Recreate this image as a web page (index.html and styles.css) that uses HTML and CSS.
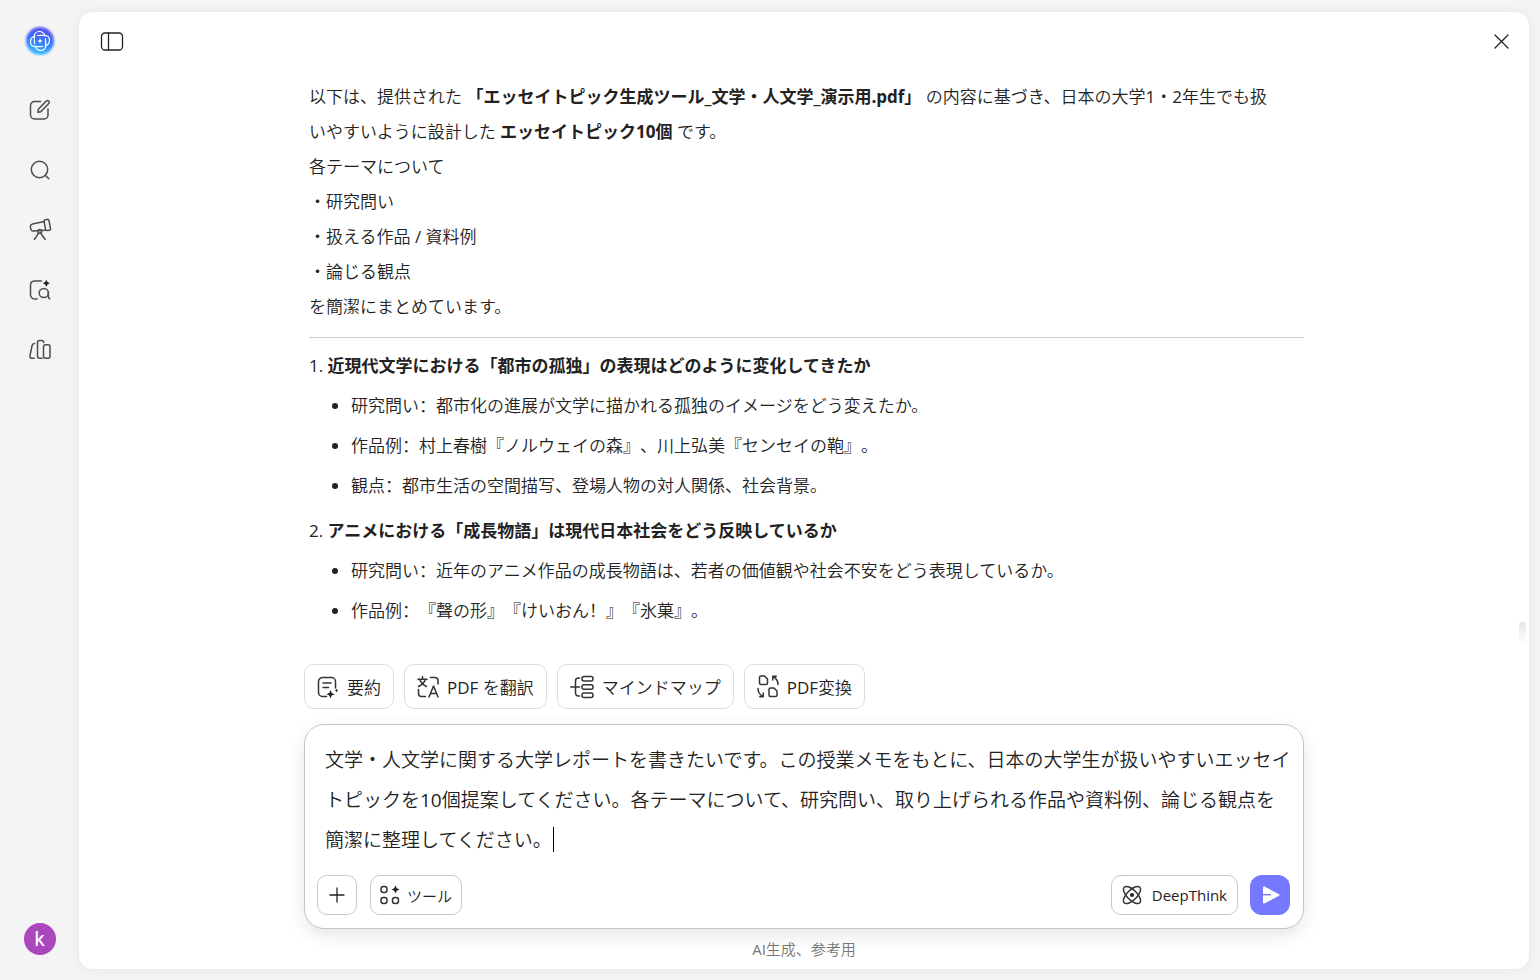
FILE: index.html
```html
<!DOCTYPE html>
<html lang="zh-CN">
<head>
  <meta charset="UTF-8" />
  <meta name="viewport" content="width=device-width, initial-scale=1.0"/>
  <title>エッセイトピック生成</title>
  <link rel="stylesheet" href="styles.css">
</head>
<body>
  <nav class="sidebar">
    <a href="#" class="logo" aria-label="ホーム">
      <svg width="32" height="32" viewBox="0 0 32 32">
        <defs>
          <linearGradient id="logoFill" x1="0.6" y1="0" x2="0.4" y2="1">
            <stop offset="0" stop-color="#5b50ee"/>
            <stop offset="0.5" stop-color="#3677f8"/>
            <stop offset="1" stop-color="#3fc4ff"/>
          </linearGradient>
          <filter id="logoGlow" x="-20%" y="-20%" width="140%" height="140%"><feGaussianBlur stdDeviation="1"/></filter>
        </defs>
        <circle cx="16" cy="16" r="14" fill="url(#logoFill)" filter="url(#logoGlow)"/>
        <g fill="none" stroke="#fff" stroke-width="1.2" stroke-linecap="round">
          <path id="petal" d="M10.300 16V11.500C10.300 8.500 12.500 6.500 15.300 6.500C18 6.500 20 8 20.800 10.800M13.500 10.500H17"/>
          <use href="#petal" transform="rotate(90 16 16)"/>
          <use href="#petal" transform="rotate(180 16 16)"/>
          <use href="#petal" transform="rotate(270 16 16)"/>
        </g>
        <path d="M16 13.200l.8 2 2 .8-2 .8-.8 2-.8-2-2-.8 2-.8z" fill="#fff"/>
      </svg>
    </a>
    <a href="#" aria-label="新しいチャット">
      <svg class="icon" width="24" height="24" viewBox="0 0 24 24">
        <path d="M12.500 3.500H6.500a4 4 0 0 0-4 4v9.500a4 4 0 0 0 4 4h9.500a4 4 0 0 0 4-4v-6"/>
        <path d="M10 14.300l.3-3 8-8.200a1.700 1.700 0 0 1 2.500 0 1.700 1.700 0 0 1 0 2.400l-8 8.200z"/>
      </svg>
    </a>
    <a href="#" aria-label="検索">
      <svg class="icon" width="24" height="24" viewBox="0 0 24 24">
        <circle cx="11.500" cy="11.500" r="8.200"/><path d="M17.500 17.500l3.300 3.300"/>
      </svg>
    </a>
    <a href="#" aria-label="探索">
      <svg class="icon" width="24" height="24" viewBox="0 0 24 24">
        <path d="M16.300 3.400l-12 2.700c-1.400.4-2.100 1.400-1.900 2.800l.4 2.200c.3 1.400 1.300 2 2.700 1.900l11.900-.8"/>
        <path d="M17.300 1.800l2-.4c1-.2 1.500.2 1.700 1.200l1.500 8c.2 1-.2 1.600-1.200 1.700l-2 .3c-1 .1-1.500-.3-1.700-1.200l-1.500-7.900c-.2-1 .2-1.500 1.200-1.700z"/>
        <circle cx="11.700" cy="13.400" r="1.900"/><path d="M10.600 15.200l-4.300 6.300M12.800 15.200l4.400 6.300"/>
      </svg>
    </a>
    <a href="#" aria-label="文書検索">
      <svg class="icon" width="24" height="24" viewBox="0 0 24 24">
        <path d="M13.500 3H6.300a4 4 0 0 0-3.800 4v10a4 4 0 0 0 4 4h2.700"/>
        <circle cx="15.800" cy="15" r="4.600"/><path d="M20.400 14v4.500c0 1.200.4 2 1.400 2.300"/>
        <path class="solid" d="M18.300 1.800l1.200 2.300 2.300 1.200-2.300 1.200-1.200 2.300-1.200-2.300-2.300-1.200 2.300-1.200z"/>
      </svg>
    </a>
    <a href="#" aria-label="ライブラリ">
      <svg class="icon" width="24" height="24" viewBox="0 0 24 24">
        <path d="M6.700 5.500c-1.500 0-2.300.6-2.600 2L2 17.500c-.3 1.600.3 2.800 2 2.800h2.200"/>
        <path d="M14 20.300h-2.500a2 2 0 0 1-2-2V4.600a2 2 0 0 1 2-2h2.200a2 2 0 0 1 2 2"/>
        <rect x="15.500" y="6.800" width="6.500" height="13.500" rx="2"/>
      </svg>
    </a>
    <button type="button" class="avatar">k</button>
  </nav>

  <main class="panel">
    <header class="topbar">
      <button type="button" class="icon-btn" aria-label="サイドバー">
        <svg class="icon thin" width="24" height="24" viewBox="0 0 24 24">
          <rect x="1.500" y="4" width="21" height="17" rx="3.500"/><path d="M8.500 4v17"/>
        </svg>
      </button>
      <button type="button" class="icon-btn" aria-label="閉じる">
        <svg class="icon thin" width="24" height="24" viewBox="0 0 24 24"><path d="M5 6l13 13M18 6l-13 13"/></svg>
      </button>
    </header>

    <section class="thread">
      <article class="message">
        <p>以下は、提供された <strong>「エッセイトピック生成ツール_文学・人文学_演示用.pdf」</strong> の内容に基づき、日本の大学1・2年生でも扱<br>いやすいように設計した <strong>エッセイトピック10個</strong> です。<br>各テーマについて<br>・研究問い<br>・扱える作品 / 資料例<br>・論じる観点<br>を簡潔にまとめています。</p>
        <hr>
        <h3>1. <strong>近現代文学における「都市の孤独」の表現はどのように変化してきたか</strong></h3>
        <ul>
          <li>研究問い：都市化の進展が文学に描かれる孤独のイメージをどう変えたか。</li>
          <li>作品例：村上春樹『ノルウェイの森』、川上弘美『センセイの鞄』。</li>
          <li>観点：都市生活の空間描写、登場人物の対人関係、社会背景。</li>
        </ul>
        <h3>2. <strong>アニメにおける「成長物語」は現代日本社会をどう反映しているか</strong></h3>
        <ul>
          <li>研究問い：近年のアニメ作品の成長物語は、若者の価値観や社会不安をどう表現しているか。</li>
          <li>作品例：『聲の形』『けいおん！』『氷菓』。</li>
        </ul>
      </article>
      <span class="scroll-thumb"></span>
    </section>

    <div class="dock">
      <div class="chips">
        <button type="button" class="chip">
          <svg class="icon dark" width="22" height="24" viewBox="0 0 22 24">
            <path d="M9.500 21.500H5.500A4 4 0 0 1 1.500 17.500V6.500a4 4 0 0 1 4-4h9a4 4 0 0 1 4 4v6.500M6 8h8M6 12.500h5.500"/>
            <path class="solid" d="M13.500 15l1.200 3 3 1.200-3 1.200-1.200 3-1.200-3-3-1.200 3-1.200zM19.500 13.500l.6 1.400 1.400.6-1.400.6-.6 1.400-.6-1.400-1.400-.6 1.400-.6z"/>
          </svg>
          要約
        </button>
        <button type="button" class="chip">
          <svg class="icon dark" width="22" height="24" viewBox="0 0 22 24">
            <path d="M5.500 1.500v2.300M1 4.200h9M8.300 4.500c-1 3.200-3.200 5.500-6.800 7M2.800 4.500c1 3.200 3.200 5.500 6.700 7"/>
            <path d="M13.500 2.500H18a3 3 0 0 1 3 3V9M1.500 14.500v4a3 3 0 0 0 3 3h4"/>
            <path d="M12 22l4.500-11L21 22M13.500 18.500h6"/>
          </svg>
          PDF を翻訳
        </button>
        <button type="button" class="chip">
          <svg class="icon dark" width="24" height="24" viewBox="0 0 24 24">
            <path d="M9.500 3H8.500C6.500 3 5.500 4.200 5.500 6v11.500c0 2 1 3.500 3 3.500h1M.8 12h8.700"/>
            <rect x="12" y="1.500" width="11" height="4.500" rx="2"/><rect x="12" y="9.700" width="11" height="4.500" rx="2"/><rect x="12" y="18" width="11" height="4.500" rx="2"/>
          </svg>
          マインドマップ
        </button>
        <button type="button" class="chip">
          <svg class="icon dark" width="22" height="24" viewBox="0 0 22 24">
            <path d="M4 1h3.500l3 3v4a1.500 1.500 0 0 1-1.500 1.500H4A1.500 1.500 0 0 1 2.500 8V2.500A1.500 1.500 0 0 1 4 1zM13.500 13H17l3 3v4a1.500 1.500 0 0 1-1.500 1.500h-5A1.500 1.500 0 0 1 12 20v-5.500a1.500 1.500 0 0 1 1.500-1.500z"/>
            <path d="M21 9.500c0-3.500-1.500-6-4.700-8M15.800 5V1.200h3.500M1 13.500c0 3.500 1.500 6 4.700 8M6.200 18v3.700H2.700"/>
          </svg>
          PDF変換
        </button>
      </div>

      <form class="composer">
        <textarea id="prompt" rows="3" spellcheck="false" aria-label="メッセージ">文学・人文学に関する大学レポートを書きたいです。この授業メモをもとに、日本の大学生が扱いやすいエッセイトピックを10個提案してください。各テーマについて、研究問い、取り上げられる作品や資料例、論じる観点を
簡潔に整理してください。</textarea>
        <span class="caret"></span>
        <div class="toolbar">
          <button type="button" class="tool square" aria-label="追加">
            <svg class="icon thin" width="16" height="16" viewBox="0 0 16 16"><path d="M8 1v14M1 8h14"/></svg>
          </button>
          <button type="button" class="tool">
            <svg class="icon dark" width="20" height="20" viewBox="0 0 20 20">
              <rect x="1" y="1.500" width="6" height="6" rx="2.500"/><rect x="1" y="12.500" width="6" height="6" rx="2.500"/><rect x="12.500" y="12.500" width="6" height="6" rx="2.500"/>
              <path class="solid" d="M15.500.5l1.300 2.700 2.700 1.300-2.700 1.300-1.300 2.700-1.300-2.700-2.700-1.300 2.700-1.300z"/>
            </svg>
            ツール
          </button>
          <button type="button" class="tool deep">
            <svg class="icon dark" width="20" height="20" viewBox="0 0 20 20">
              <ellipse cx="10" cy="10" rx="11" ry="5" transform="rotate(45 10 10)"/>
              <ellipse cx="10" cy="10" rx="11" ry="5" transform="rotate(-45 10 10)"/>
              <circle class="solid" cx="10" cy="10" r="2"/>
            </svg>
            DeepThink
          </button>
          <button type="submit" class="send" aria-label="送信">
            <svg width="20" height="20" viewBox="0 0 20 20">
              <path d="M3 2.600c0-.9.700-1.300 1.500-1L19 9.200c.8.400.8 1.200 0 1.600L4.500 18.400c-.8.300-1.500-.1-1.500-1z" fill="#fff"/>
              <path d="M2 9.700h9" stroke="#7678ff" stroke-width="1.400"/>
            </svg>
          </button>
        </div>
      </form>
      <p class="note">AI生成、参考用</p>
    </div>
  </main>
</body>
</html>
```

FILE: styles.css
```css
* {
  box-sizing: border-box;
  margin: 0;
  padding: 0;
}

body {
  display: flex;
  height: 100vh;
  background: #f4f4f4;
  color: #222;
  font-family: "Open Sans", "Noto Sans CJK SC DemiLight", "Noto Sans CJK SC", sans-serif;
  font-size: 17px;
  text-spacing-trim: space-all;
}

button, textarea {
  font: inherit;
  color: inherit;
  background: none;
  border: none;
}

button {
  cursor: pointer;
}

.icon {
  display: block;
  flex: none;
  fill: none;
  stroke: #4c4c4c;
  stroke-width: 1.5;
  stroke-linecap: round;
  stroke-linejoin: round;
}

.icon.dark {
  stroke: #333;
}

.icon.thin {
  stroke: #222;
  stroke-width: 1.3;
}

.icon .solid {
  fill: #222;
  stroke: none;
}

/* sidebar */
.sidebar {
  flex: none;
  width: 79px;
  display: flex;
  flex-direction: column;
  align-items: center;
  gap: 36px;
  padding: 25px 0 25px;
}

.sidebar a {
  display: block;
}

.logo {
  height: 37px;
}

.avatar {
  width: 32px;
  height: 32px;
  margin-top: auto;
  border-radius: 50%;
  background: #ab47bc;
  color: #fff;
  font-family: Roboto, sans-serif;
  font-size: 20px;
  line-height: 32px;
}

/* main panel */
.panel {
  flex: 1;
  min-width: 0;
  display: flex;
  flex-direction: column;
  margin: 12px 11px 11px 0;
  border-radius: 14px;
  background: #fff;
  box-shadow: 0 0 12px rgba(0,0,0,0.06);
}

.topbar {
  display: flex;
  justify-content: space-between;
  padding: 17px 15px 18px 21px;
}

.thread {
  position: relative;
  flex: 1;
  min-height: 0;
  overflow: hidden;
}

.message {
  max-width: 1000px;
  margin: 0 auto;
  padding: 8px 0 0 5px;
  line-height: 35px;
}

.message hr {
  margin: 13px 0 10px;
  border: none;
  border-top: 1px solid #ccc;
}

.message h3 {
  font-size: 17px;
  font-weight: 400;
}

.message strong {
  font-family: "Open Sans", "Noto Sans CJK SC", sans-serif;
  font-weight: 700;
}

.message ul {
  padding-left: 42px;
  margin-bottom: 10px;
}

.message li {
  margin-top: 5px;
}

.scroll-thumb {
  position: absolute;
  right: 3px;
  bottom: 0;
  width: 7px;
  height: 22px;
  border-radius: 3px 3px 0 0;
  background: linear-gradient(#e6e6e6, #fff);
}

/* chips and composer */
.dock {
  width: 100%;
  max-width: 1000px;
  margin: 0 auto;
  padding: 20px 0 9px;
}

.chips {
  display: flex;
  gap: 10px;
  margin-bottom: 15px;
}

.chip {
  display: flex;
  align-items: center;
  gap: 8px;
  height: 45px;
  padding: 0 12px;
  border: 1px solid #ddd;
  border-radius: 10px;
  background: #fff;
}

.composer {
  position: relative;
  padding: 15px 0 13px;
  border: 1px solid #c4c4c4;
  border-radius: 20px;
  background: #fff;
  box-shadow: 0 6px 18px rgba(0,0,0,0.1);
}

.composer textarea {
  display: block;
  width: calc(100% - 28px);
  margin: 0 8px 15px 20px;
  font-size: 19px;
  line-height: 40px;
  outline: none;
  resize: none;
  overflow: hidden;
}

.caret {
  position: absolute;
  left: 248px;
  top: 102px;
  width: 1px;
  height: 25px;
  background: #000;
}

.composer textarea:focus + .caret {
  display: none;
}

.toolbar {
  display: flex;
  align-items: center;
  padding: 0 13px 0 12px;
}

.tool {
  display: flex;
  align-items: center;
  gap: 7px;
  height: 40px;
  padding: 0 9px;
  border: 1px solid #c8c8c8;
  border-radius: 10px;
  font-size: 15px;
}

.tool.square {
  width: 40px;
  margin-right: 13px;
  justify-content: center;
}

.tool.deep {
  gap: 10px;
  margin-left: auto;
  margin-right: 12px;
  padding: 0 10px;
}

.send {
  display: flex;
  align-items: center;
  justify-content: center;
  width: 40px;
  height: 40px;
  border-radius: 12px;
  background: #7678ff;
}

.note {
  margin-top: 9px;
  font-size: 15px;
  line-height: 22px;
  text-align: center;
  color: #777;
}
```
